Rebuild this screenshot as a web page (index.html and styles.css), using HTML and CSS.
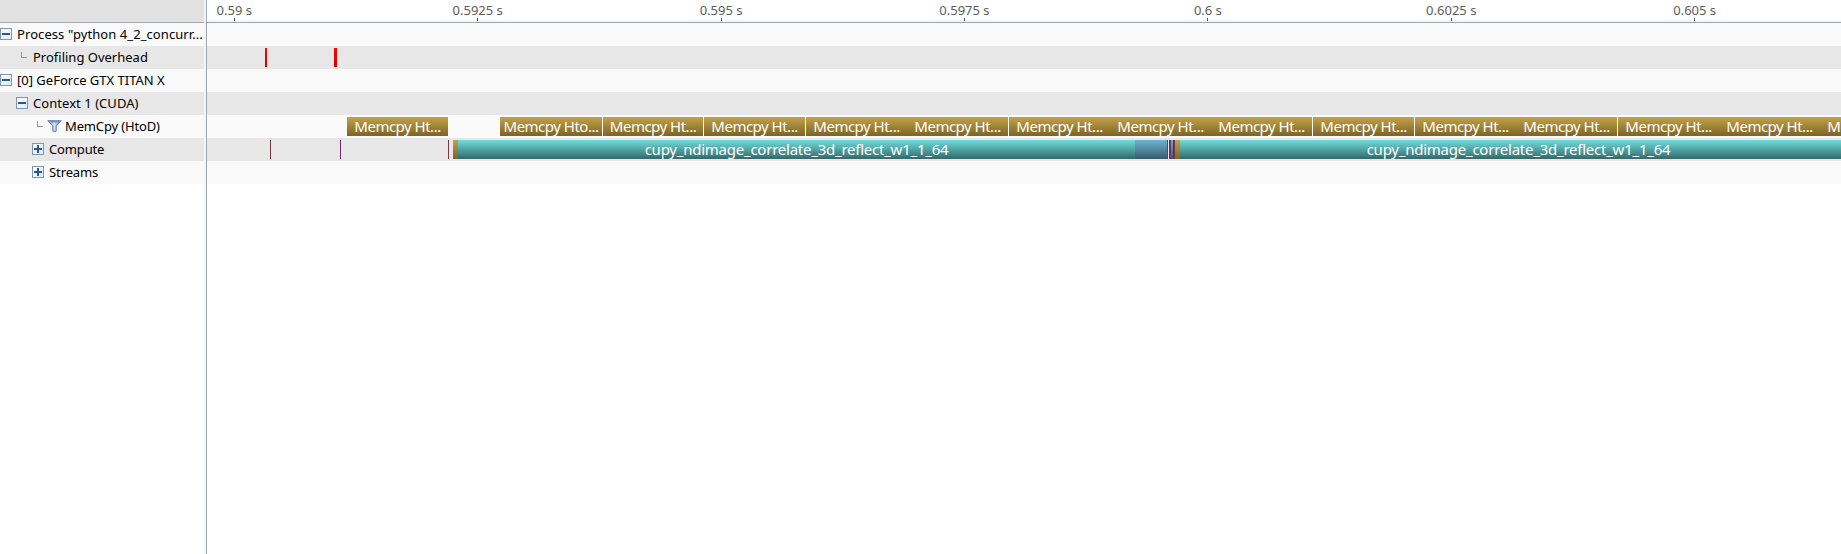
FILE: index.html
```
<!DOCTYPE html>
<html lang="en">
<head>
<meta charset="utf-8">
<title>Profiler timeline</title>
<link rel="stylesheet" href="styles.css">
</head>
<body>
<div class="profiler">
  <aside class="tree">
    <div class="tree-head"></div>
    <div class="row"><i class="toggle"></i><span class="name n-process">Process "python 4_2_concurr...</span></div>
    <div class="row level-1"><i class="elbow"></i><span class="name n-overhead">Profiling Overhead</span></div>
    <div class="row"><i class="toggle"></i><span class="name n-device">[0] GeForce GTX TITAN X</span></div>
    <div class="row level-ctx"><i class="toggle"></i><span class="name n-context">Context 1 (CUDA)</span></div>
    <div class="row level-copy"><i class="elbow"></i>
      <svg class="funnel" width="15" height="12" viewBox="0 0 15 12"><defs><linearGradient id="f"><stop offset="0" stop-color="#6c8bbd"/><stop offset=".5" stop-color="#d3e0f2"/><stop offset="1" stop-color="#5476ad"/></linearGradient></defs><path d="M.7.7H14.3L9.2 6V11.3H5.8V6Z" fill="url(#f)" stroke="#6581b0"/><path d="M1 1H14L12.5 2.5H2.5Z" fill="#7896c4"/></svg>
      <span class="name n-memcpy">MemCpy (HtoD)</span></div>
    <div class="row level-2"><i class="toggle plus"></i><span class="name n-compute">Compute</span></div>
    <div class="row level-2"><i class="toggle plus"></i><span class="name n-streams">Streams</span></div>
  </aside>
  <main class="timeline">
    <div class="ruler">
      <div class="tick"><span>0.59 s</span></div><div class="tick"><span>0.5925 s</span></div><div class="tick"><span>0.595 s</span></div><div class="tick"><span>0.5975 s</span></div><div class="tick"><span>0.6 s</span></div><div class="tick"><span>0.6025 s</span></div><div class="tick"><span>0.605 s</span></div>
    </div>
    <div class="row"></div>
    <div class="row"><b class="bar red" style="margin-left:58px;width:2px"></b><b class="bar red" style="margin-left:67px;width:3px"></b></div>
    <div class="row"></div>
    <div class="row"></div>
    <div class="row">
      <b class="bar gold" style="margin-left:140px;width:101px"><span class="copy">Memcpy Ht...</span></b>
      <b class="bar gold" style="margin-left:52px;width:102px"><span class="copy">Memcpy Hto...</span></b>
      <b class="bar gold" style="margin-left:1px;width:100px"><span class="copy">Memcpy Ht...</span></b>
      <b class="bar gold" style="margin-left:1px;width:101px"><span class="copy">Memcpy Ht...</span></b>
      <b class="bar gold" style="margin-left:1px;width:101px"><span class="copy">Memcpy Ht...</span></b>
      <b class="bar gold" style="width:101px"><span class="copy">Memcpy Ht...</span></b>
      <b class="bar gold" style="margin-left:1px;width:101px"><span class="copy">Memcpy Ht...</span></b>
      <b class="bar gold" style="width:101px"><span class="copy">Memcpy Ht...</span></b>
      <b class="bar gold" style="width:101px"><span class="copy">Memcpy Ht...</span></b>
      <b class="bar gold" style="margin-left:1px;width:101px"><span class="copy">Memcpy Ht...</span></b>
      <b class="bar gold" style="margin-left:1px;width:101px"><span class="copy">Memcpy Ht...</span></b>
      <b class="bar gold" style="width:101px"><span class="copy">Memcpy Ht...</span></b>
      <b class="bar gold" style="margin-left:1px;width:101px"><span class="copy">Memcpy Ht...</span></b>
      <b class="bar gold" style="width:101px"><span class="copy">Memcpy Ht...</span></b>
      <b class="bar gold" style="width:101px"><span class="copy">Memcpy Ht...</span></b>
    </div>
    <div class="row">
      <b class="bar maroon" style="margin-left:63px;width:1px"></b>
      <b class="bar purple" style="margin-left:69px;width:1px"></b>
      <b class="bar maroon" style="margin-left:107px;width:1px"></b>
      <b class="bar gold" style="margin-left:4px;width:5px"></b>
      <b class="bar teal" style="width:677px"><span class="kernel">cupy_ndimage_correlate_3d_reflect_w1_1_64</span></b>
      <b class="bar blue" style="width:32px"></b>
      <b class="bar maroon" style="width:1px"></b>
      <b class="bar purple" style="margin-left:1px;width:2px"></b>
      <b class="bar blue" style="width:2px"></b>
      <b class="bar indigo" style="width:1px"></b>
      <b class="bar maroon" style="width:1px"></b>
      <b class="bar gold" style="width:5px"></b>
      <b class="bar teal" style="width:677px"><span class="kernel">cupy_ndimage_correlate_3d_reflect_w1_1_64</span></b>
    </div>
    <div class="row"></div>
  </main>
</div>
</body>
</html>
```
FILE: styles.css
```
* { box-sizing: border-box; }
body { margin: 0; background: #fff; font-family: "Noto Sans", "Open Sans", sans-serif; color: #000; overflow: hidden; }
.profiler { display: flex; width: 100vw; height: 100vh; overflow: hidden; }
.tree { width: 206px; flex: none; border-right: 2px solid #f5f5f5; }
.tree-head { height: 23px; background: #e1e1e1; border-bottom: 1px solid #a0a7af; }
.timeline { flex: 1; min-width: 0; border-left: 1px solid #a0a7af; overflow: hidden; }
.row { display: flex; align-items: center; height: 23px; background: #fafafa; white-space: nowrap; }
.row:nth-child(odd) { background: #e7e7e7; }
.tree .row { padding-bottom: 1px; }

.name { font-size: 13px; line-height: 22px; margin-left: 5px; }
.n-process { letter-spacing: 0.08px; }
.n-context { letter-spacing: 0.05px; }
.level-1 { padding-left: 21px; }
.level-1 .name { margin-left: 6px; }
.level-ctx { padding-left: 16px; }
.level-copy { padding-left: 37px; }
.level-copy .name { margin-left: 3px; letter-spacing: -0.15px; }
.level-2 { padding-left: 32px; }
.n-compute { letter-spacing: -0.15px; }
.n-streams { letter-spacing: -0.1px; }
.toggle { flex: none; width: 12px; height: 12px; border: 1px solid #7f95bb; background: linear-gradient(#2f5597, #2f5597) center / 8px 2px no-repeat, linear-gradient(135deg, #fff, #d8effa); }
.plus { background: linear-gradient(#2f5597, #2f5597) center / 8px 2px no-repeat, linear-gradient(#2f5597, #2f5597) center / 2px 8px no-repeat, linear-gradient(135deg, #fff, #d8effa); }
.elbow { flex: none; width: 6px; height: 6px; margin-top: -5px; border: solid #8499b5; border-width: 0 0 1px 1px; }
.funnel { flex: none; margin-left: 4px; }

.ruler { display: flex; height: 23px; background: linear-gradient(#f5f5f5, #f5f5f5) 0 20px / 100% 2px no-repeat; border-bottom: 1px solid #a0a7af; }
.tick { flex: none; width: 243.4px; display: flex; flex-direction: column; align-items: center; font-size: 13px; line-height: 20px; color: #5c5c5c; }
.tick:first-child { margin-left: -94.4px; }
.tick span { height: 18px; }
.tick::after { content: ""; width: 1px; height: 3px; background: #555; }

.bar { flex: none; display: flex; justify-content: center; align-items: center; height: 19px; color: #fff; font-weight: 400; font-size: 15px; line-height: 19px; overflow: hidden; }
.copy { letter-spacing: -0.5px; }
.kernel { letter-spacing: -0.24px; }
.red { background: linear-gradient(#ff0000, #d80000); }
.gold { background: linear-gradient(#c3a246, #7d6426); }
.teal { background: linear-gradient(#70dddd, #32696a); }
.blue { background: linear-gradient(#6eb3d3, #375b6d); }
.maroon { background: #7a3546; }
.purple { background: #683268; }
.indigo { background: #403468; }
```
